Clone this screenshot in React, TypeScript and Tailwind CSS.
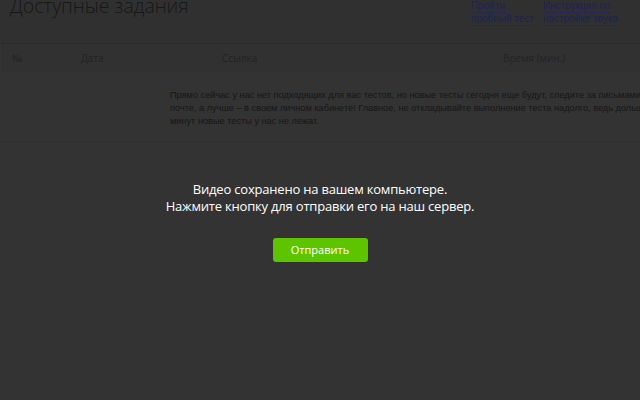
import React from "react";

export default function App() {
  return (
    <div
      className="relative w-[640px] h-[400px] overflow-hidden bg-[#333333]"
      style={{ fontFamily: '"Open Sans", "Noto Sans", sans-serif' }}
    >
      {/* underlying page (dimmed) */}
      <div className="flex flex-col">
        <div className="h-[43px] bg-[#303030] flex items-start">
          <h1 className="ml-[10px] -mt-[6px] text-[19.5px] font-light leading-[24px] text-[#171717] whitespace-nowrap">
            Доступные задания
          </h1>
          <div
            className="ml-auto w-[169px] flex text-[10px] leading-[12px] text-[#1c2450] whitespace-nowrap"
            style={{ fontFamily: '"Liberation Sans", Arial, sans-serif' }}
          >
            <a className="w-[72px] flex flex-col items-start">
              <span className="border-b border-dotted border-[#1c2450]">Пройти</span>
              <span className="border-b border-dotted border-[#1c2450]">пробный тест</span>
            </a>
            <a className="flex-1 flex flex-col items-start">
              <span className="border-b border-dotted border-[#1c2450]">Инструкция по</span>
              <span className="border-b border-dotted border-[#1c2450]">настройке звука</span>
            </a>
          </div>
        </div>
        <div className="h-[1px] bg-[#2b2a2b]" />
        <div className="h-[28px] ml-[2px] border-l border-[#2e2e2e] bg-[#313131] flex items-center text-[10px] text-[#232323] whitespace-nowrap">
          <span className="ml-[9px] w-[69px]">№</span>
          <span className="w-[141px]">Дата</span>
          <span className="w-[281px]">Ссылка</span>
          <span>Время (мин.)</span>
        </div>
        <div
          className="h-[69px] pl-[170px] pt-[17px] overflow-hidden text-[9.2px] leading-[13px] text-[#161616] whitespace-nowrap"
          style={{ fontFamily: '"Liberation Sans", Arial, sans-serif' }}
        >
          <p>Прямо сейчас у нас нет подходящих для вас тестов, но новые тесты сегодня еще будут, следите за письмами на почте</p>
          <p>почте, а лучше – в своем личном кабинете! Главное, не откладывайте выполнение теста надолго, ведь дольше нескольких</p>
          <p>минут новые тесты у нас не лежат.</p>
        </div>
        <div className="h-[1px] bg-[#2f2f2f]" />
      </div>

      {/* overlay message */}
      <div className="absolute inset-0 flex flex-col items-center pt-[181px]">
        <p className="text-[13px] leading-[17px] tracking-[-0.2px] text-white text-center">
          Видео сохранено на вашем компьютере.
          <br />
          Нажмите кнопку для отправки его на наш сервер.
        </p>
        <button className="mt-[23px] w-[95px] h-[24px] rounded-[3px] bg-[#5fc400] text-white text-[11px] leading-[24px]">
          Отправить
        </button>
      </div>
    </div>
  );
}
